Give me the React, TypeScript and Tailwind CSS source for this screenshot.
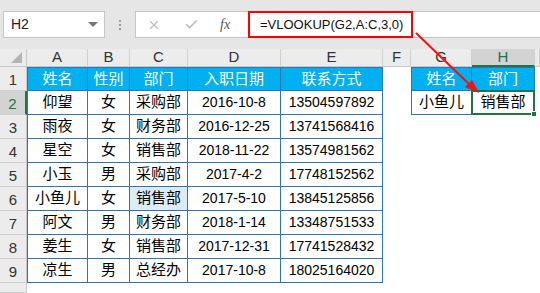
import { Fragment } from 'react';
import { X, Check } from 'lucide-react';

const font = { fontFamily: '"Liberation Sans", "Noto Sans CJK SC", sans-serif' };

const letters = ['A', 'B', 'C', 'D', 'E', 'F', 'G', 'H', ''];

const rows: string[][] = [
  ['姓名', '性别', '部门', '入职日期', '联系方式'],
  ['仰望', '女', '采购部', '2016-10-8', '13504597892'],
  ['雨夜', '女', '财务部', '2016-12-25', '13741568416'],
  ['星空', '女', '销售部', '2018-11-22', '13574981562'],
  ['小玉', '男', '采购部', '2017-4-2', '17748152562'],
  ['小鱼儿', '女', '销售部', '2017-5-10', '13845125856'],
  ['阿文', '男', '财务部', '2018-1-14', '13348751533'],
  ['姜生', '女', '销售部', '2017-12-31', '17741528432'],
  ['凉生', '男', '总经办', '2017-10-8', '18025164020'],
];

const lookup: string[][] = [
  ['姓名', '部门'],
  ['小鱼儿', '销售部'],
];

function ColHeader({ label, active }: { label: string; active?: boolean }) {
  return (
    <div
      className={`flex items-center justify-center border-r border-[#d0d0d0] text-[15px] ${
        active
          ? 'bg-[#d3d3d3] border-b-2 border-b-[#217346] text-[#217346]'
          : 'bg-[#ececec] border-b border-b-[#c8c8c8] text-[#333]'
      }`}
    >
      {label}
    </div>
  );
}

function RowHeader({ n, active }: { n?: number; active?: boolean }) {
  return (
    <div
      className={`flex items-center justify-center pt-[3px] border-b border-[#d0d0d0] text-[15px] ${
        active
          ? 'bg-[#d3d3d3] border-r-2 border-r-[#217346] text-[#217346]'
          : 'bg-[#ececec] border-r border-r-[#c8c8c8] text-[#333]'
      }`}
    >
      {n}
    </div>
  );
}

function Cell({
  text,
  head,
  left,
  top,
  fill,
  num,
  children,
}: {
  text: string;
  head?: boolean;
  left?: boolean;
  top?: boolean;
  fill?: boolean;
  num?: boolean;
  children?: React.ReactNode;
}) {
  return (
    <div
      className={`relative flex items-center justify-center border-r border-b border-[#2e75b6] whitespace-nowrap ${
        num ? 'text-[14px]' : 'text-[15px]'
      } ${left ? 'border-l' : ''} ${top ? 'border-t' : ''} ${
        head ? 'bg-[#00b0f0] text-white' : fill ? 'bg-[#ddebf7] text-black' : 'bg-white text-black'
      }`}
    >
      {text}
      {children}
    </div>
  );
}

export default function App() {
  return (
    <div className="relative w-[540px] h-[293px] overflow-hidden bg-white" style={font}>
      {/* formula bar */}
      <div className="h-[49px] bg-[#e6e6e6] pt-[11px] flex items-start">
        <div className="ml-[3px] w-[102px] h-[27px] bg-white border border-[#c6c6c6] flex items-center justify-between pl-[7px] pr-[6px]">
          <span className="text-[14px] text-[#222]">H2</span>
          <span className="w-0 h-0 border-l-[5px] border-r-[5px] border-t-[5px] border-l-transparent border-r-transparent border-t-[#777]" />
        </div>
        <div className="w-[30px] h-[27px] flex flex-col items-center justify-center gap-[2px]">
          <span className="w-[2px] h-[2px] bg-[#9a9a9a]" />
          <span className="w-[2px] h-[2px] bg-[#9a9a9a]" />
          <span className="w-[2px] h-[2px] bg-[#9a9a9a]" />
        </div>
        <div className="flex-1 h-[27px] bg-white border border-[#c6c6c6] border-r-0 flex items-stretch">
          <div className="w-[112px] flex items-center">
            <X className="ml-[11px] w-[14px] h-[14px] text-[#bcbcbc]" strokeWidth={2} />
            <Check className="ml-[23px] w-[15px] h-[15px] text-[#bcbcbc]" strokeWidth={2.5} />
            <span
              className="ml-[21px] text-[14px] italic text-[#555]"
              style={{ fontFamily: '"Liberation Serif", serif' }}
            >
              fx
            </span>
          </div>
          <div className="-my-px w-[165px] border-2 border-[#ff0000] flex items-center pl-[10px] text-[13px] text-[#111]">
            =VLOOKUP(G2,A:C,3,0)
          </div>
        </div>
      </div>

      {/* sheet grid */}
      <div className="grid h-[244px] grid-cols-[27px_61px_42px_58px_93px_102px_28px_61px_63px_1fr] grid-rows-[18px_repeat(9,24px)_1fr]">
        <div className="relative bg-[#ececec] border-r border-b border-[#c8c8c8]">
          <svg className="absolute right-[4px] bottom-[3px]" width="11" height="11" viewBox="0 0 11 11">
            <polygon points="11,0 11,11 0,11" fill="#b5b5b5" />
          </svg>
        </div>
        {letters.map((l, i) => (
          <ColHeader key={i} label={l} active={l === 'H'} />
        ))}

        {rows.map((r, ri) => (
          <Fragment key={ri}>
            <RowHeader n={ri + 1} active={ri === 1} />
            {r.map((t, ci) => (
              <Cell
                key={ci}
                text={t}
                head={ri === 0}
                left={ci === 0}
                top={ri === 0}
                fill={ri === 5 && ci === 2}
                num={ri > 0 && ci >= 3}
              />
            ))}
            <div />
            {ri < 2 ? (
              lookup[ri].map((t, ci) => (
                <Cell key={`g${ci}`} text={t} head={ri === 0} left={ci === 0} top={ri === 0}>
                  {ri === 1 && ci === 1 && (
                    <>
                      <span className="absolute -left-px -top-px -right-px -bottom-px border-2 border-[#217346]" />
                      <span className="absolute -right-[3px] -bottom-[3px] w-[6px] h-[6px] bg-[#217346] border border-white" />
                    </>
                  )}
                </Cell>
              ))
            ) : (
              <>
                <div />
                <div />
              </>
            )}
            <div />
          </Fragment>
        ))}

        <RowHeader />
      </div>

      {/* red arrow */}
      <svg className="absolute left-0 top-0 pointer-events-none" width="540" height="293">
        <line x1="416" y1="33" x2="470" y2="85" stroke="#f01414" strokeWidth="2" />
        <polygon points="479,93 465,87 472,80" fill="#f01414" />
      </svg>
    </div>
  );
}
